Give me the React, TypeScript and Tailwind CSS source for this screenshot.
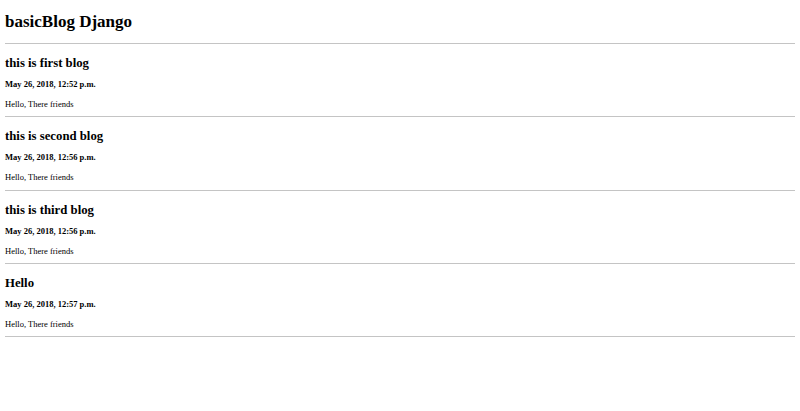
const posts = [
  { title: "this is first blog", date: "May 26, 2018, 12:52 p.m." },
  { title: "this is second blog", date: "May 26, 2018, 12:56 p.m." },
  { title: "this is third blog", date: "May 26, 2018, 12:56 p.m." },
  { title: "Hello", date: "May 26, 2018, 12:57 p.m." },
];

export default function App() {
  return (
    <div className="min-h-[411px] bg-white px-[5px] text-black [font-family:'Liberation_Serif',serif]">
      <h1 className="pt-[12px] pb-[11px] text-[17px] font-bold leading-[20px]">basicBlog Django</h1>
      <hr className="border-0 border-t border-[#c4c4c4]" />
      {posts.map((post) => (
        <div key={post.title}>
          <h2 className="pt-[12px] text-[12.75px] font-bold leading-[15px]">{post.title}</h2>
          <h4 className="mt-[8px] text-[8.5px] font-bold leading-[10px]">{post.date}</h4>
          <p className="mt-[10px] text-[8.5px] leading-[10px]">Hello, There friends</p>
          <hr className="mt-[7.25px] border-0 border-t border-[#c4c4c4]" />
        </div>
      ))}
    </div>
  );
}
